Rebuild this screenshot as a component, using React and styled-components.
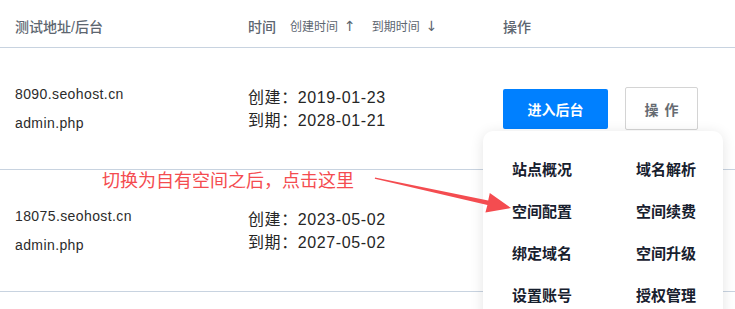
import React from "react";
import styled, { createGlobalStyle } from "styled-components";

const Global = createGlobalStyle`
  html, body { margin: 0; padding: 0; background: #fff; overflow: hidden; }
  body { font-family: "Liberation Sans", "Noto Sans CJK SC", sans-serif; }
`;

const Page = styled.div`
  position: relative;
  width: 735px;
  height: 309px;
  overflow: hidden;
  background: #fff;
`;

const HeaderRow = styled.div`
  display: grid;
  grid-template-columns: 248px 255px 1fr;
  height: 48px;
  padding-top: 4px;
  box-sizing: border-box;
  align-items: center;
  border-bottom: 1px solid #c8d3e0;
  color: #5d6670;
`;

const HeadCell = styled.div`
  padding-left: ${(p) => (p.$first ? "15px" : "0")};
  font-size: 14px;
  font-weight: 500;
  display: flex;
  align-items: center;
  white-space: nowrap;
`;

const Sort = styled.span`
  font-size: 12px;
  font-weight: 400;
  margin-left: ${(p) => p.$gap}px;
  display: flex;
  align-items: center;
`;

const SortArrow = styled.span`
  font-family: "DejaVu Sans", sans-serif;
  font-size: 14px;
  margin-left: 6px;
`;

const Row = styled.div`
  display: grid;
  grid-template-columns: 248px 255px 1fr;
  height: 122px;
  box-sizing: border-box;
  align-items: center;
  border-bottom: 1px solid #c8d3e0;
`;

const SiteCell = styled.div`
  padding-left: 15px;
  font-size: 14px;
  line-height: 29px;
  color: #2b2b2b;
  letter-spacing: 0.4px;
`;

const TimeCell = styled.div`
  font-size: 16px;
  line-height: 23px;
  color: #262626;
  letter-spacing: 0.6px;
  white-space: nowrap;
`;

const ActionCell = styled.div`
  display: flex;
  align-items: center;
  position: relative;
`;

const PrimaryButton = styled.div`
  width: 105px;
  height: 40px;
  background: #0080ff;
  border-radius: 2px;
  color: #fff;
  font-size: 14px;
  font-weight: 700;
  display: flex;
  align-items: center;
  justify-content: center;
`;

const OpsButton = styled.div`
  margin-left: 17px;
  width: 73px;
  height: 43px;
  box-sizing: border-box;
  border: 1px solid #d4d4d4;
  border-radius: 2px;
  color: #666b72;
  font-size: 14px;
  font-weight: 700;
  letter-spacing: 6px;
  padding-left: 6px;
  display: flex;
  align-items: center;
  justify-content: center;
`;

const Menu = styled.div`
  position: absolute;
  left: -20px;
  top: calc(100% + 1px);
  width: 240px;
  height: 220px;
  box-sizing: border-box;
  padding: 16px 0 0 29px;
  background: #fff;
  border-radius: 10px;
  box-shadow: 0 2px 14px rgba(0, 0, 0, 0.11);
  display: grid;
  grid-template-columns: 124px 1fr;
  grid-auto-rows: 42px;
  align-content: start;
  align-items: center;
  z-index: 2;
`;

const MenuItem = styled.div`
  font-size: 15px;
  font-weight: 600;
  color: #17202e;
  white-space: nowrap;
`;

const Note = styled.div`
  position: absolute;
  left: 102px;
  top: 170px;
  font-size: 18px;
  line-height: 18px;
  color: #f44c50;
  font-family: "Noto Sans CJK SC", sans-serif;
  white-space: nowrap;
  z-index: 3;
`;

const ArrowSvg = styled.svg`
  position: absolute;
  left: 0;
  top: 0;
  pointer-events: none;
  z-index: 4;
`;

const rows = [
  { host: "8090.seohost.cn", created: "2019-01-23", expires: "2028-01-21", actions: true },
  { host: "18075.seohost.cn", created: "2023-05-02", expires: "2027-05-02" },
];

const menuItems = ["站点概况", "域名解析", "空间配置", "空间续费", "绑定域名", "空间升级", "设置账号", "授权管理"];

export default function App() {
  return (
    <Page>
      <Global />
      <HeaderRow>
        <HeadCell $first>测试地址/后台</HeadCell>
        <HeadCell>
          时间
          <Sort $gap={14}>
            创建时间<SortArrow>↑</SortArrow>
          </Sort>
          <Sort $gap={16}>
            到期时间<SortArrow>↓</SortArrow>
          </Sort>
        </HeadCell>
        <HeadCell>操作</HeadCell>
      </HeaderRow>
      {rows.map((r) => (
        <Row key={r.host}>
          <SiteCell>
            <div>{r.host}</div>
            <div>admin.php</div>
          </SiteCell>
          <TimeCell>
            <div>创建：{r.created}</div>
            <div>到期：{r.expires}</div>
          </TimeCell>
          <ActionCell>
            {r.actions && (
              <>
                <PrimaryButton>进入后台</PrimaryButton>
                <OpsButton>操作</OpsButton>
                <Menu>
                  {menuItems.map((m) => (
                    <MenuItem key={m}>{m}</MenuItem>
                  ))}
                </Menu>
              </>
            )}
          </ActionCell>
        </Row>
      ))}
      <Note>切换为自有空间之后，点击这里</Note>
      <ArrowSvg width="735" height="309" viewBox="0 0 735 309">
        <polygon
          points="375,177.4 488.2,200.6 489.8,193 511,208 485.4,212.6 487.4,205 374.8,178.8"
          fill="#f44c50"
        />
      </ArrowSvg>
    </Page>
  );
}
